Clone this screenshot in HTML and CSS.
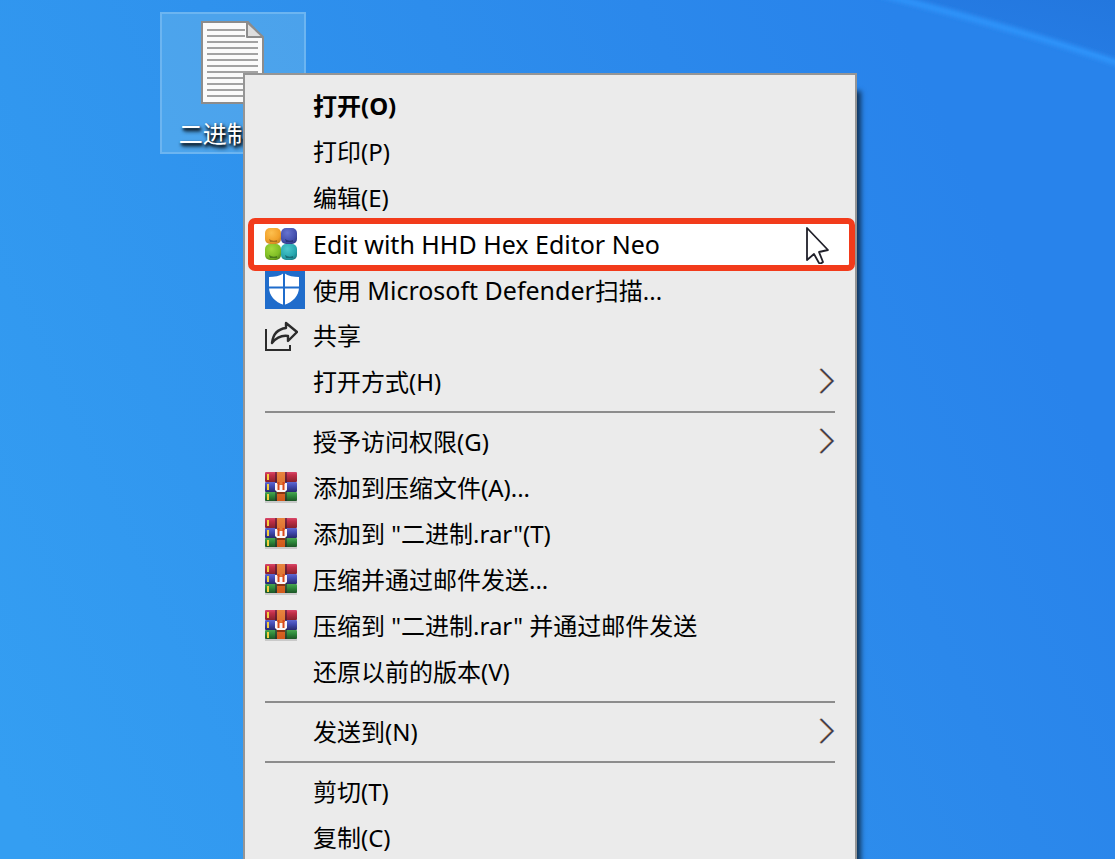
FILE: index.html
```html
<!DOCTYPE html>
<html lang="zh-CN">
<head>
<meta charset="utf-8">
<title>桌面</title>
<link rel="stylesheet" href="styles.css">
</head>
<body>
<svg class="symbols" aria-hidden="true">
  <defs>
    <linearGradient id="red" x1="0" y1="0" x2="0" y2="1"><stop offset="0" stop-color="#d9486a"/><stop offset=".3" stop-color="#c22f48"/><stop offset="1" stop-color="#86202c"/></linearGradient>
    <linearGradient id="blue" x1="0" y1="0" x2="0" y2="1"><stop offset="0" stop-color="#5f68d0"/><stop offset=".4" stop-color="#434cb4"/><stop offset="1" stop-color="#26286c"/></linearGradient>
    <linearGradient id="green" x1="0" y1="0" x2="0" y2="1"><stop offset="0" stop-color="#4aa552"/><stop offset=".4" stop-color="#2f8c3c"/><stop offset="1" stop-color="#1c5425"/></linearGradient>
    <linearGradient id="strap" x1="0" y1="0" x2="0" y2="1"><stop offset="0" stop-color="#e8853f"/><stop offset="1" stop-color="#d0581a"/></linearGradient>
  </defs>
  <symbol id="rar" viewBox="0 0 32 32">
    <rect y="28" width="32" height="3" fill="#c9c9c9"/>
    <rect width="32" height="10" rx="1" fill="url(#red)"/>
    <rect y="10" width="32" height="10" rx="1" fill="url(#blue)"/>
    <rect y="20" width="32" height="9" rx="1" fill="url(#green)"/>
    <path d="M11 0v29M21 0v29" stroke="#2b1830" stroke-opacity=".5" stroke-width="2"/>
    <path d="M2 2h2v6H2zM2 12h2v6H2zM2 22h2v6H2z" fill="#f7cf3c"/>
    <rect x="12" width="8" height="29" fill="url(#strap)"/>
    <path d="M12 20h8v2h-8z" fill="#8a3513"/>
    <path d="M10 11h3v2h6v-2h3v7l-2 2h-8l-2-2z" fill="#fbf6f6"/>
    <path d="M12 10h8v2h-8z" fill="#e17a38"/>
    <path d="M13.500 10v8M18.500 10v8" stroke="#d9481b" stroke-width="2"/>
  </symbol>
  <symbol id="arrow" viewBox="0 0 16 28">
    <path d="M1 1l12 12L1 25" fill="none" stroke="#e3a65b" stroke-width="2"/>
    <path d="M2.500 1l12 12-12 12" fill="none" stroke="#4f9be6" stroke-width="1.500"/>
    <path d="M1.700 1l12 12-12 12" fill="none" stroke="#47303f" stroke-width="1.300"/>
  </symbol>
</svg>

<svg class="wallpaper" viewBox="0 0 1115 859" preserveAspectRatio="none" aria-hidden="true">
  <defs>
    <linearGradient id="sky" gradientUnits="userSpaceOnUse" x1="0" y1="780" x2="1030" y2="300">
      <stop offset="0" stop-color="#349ef2"/><stop offset=".45" stop-color="#2f92ed"/><stop offset=".8" stop-color="#2b88eb"/><stop offset="1" stop-color="#2883eb"/>
    </linearGradient>
    <linearGradient id="corner" x1="0" y1="1" x2="1" y2="0"><stop offset="0" stop-color="#277fe8"/><stop offset="1" stop-color="#2377de"/></linearGradient>
    <filter id="soft" x="-10%" y="-30%" width="120%" height="160%"><feGaussianBlur stdDeviation="2"/></filter>
  </defs>
  <rect width="1115" height="859" fill="url(#sky)"/>
  <path d="M900 0h215v60C1050 40 970 18 900 0z" fill="url(#corner)"/>
  <path d="M880-6C960 14 1045 38 1130 67" fill="none" stroke="#2f94fb" stroke-width="6" filter="url(#soft)"/>
</svg>

<main class="desktop">
  <button class="file" type="button">
    <svg class="page" viewBox="0 0 66 86" aria-hidden="true">
      <path d="M2 2h46l15 16v65H2z" fill="#fafafa" stroke="#8c8c8c" stroke-width="2"/>
      <path d="M7 10h38M7 16h38M7 22h51M7 28h51M7 34h51M7 40h51M7 46h51M7 52h51M7 58h51M7 64h51M7 70h51M7 76h51" stroke="#a2a2a2" stroke-width="2"/>
      <path d="M47 2v15h16z" fill="#dedede" stroke="#8c8c8c" stroke-width="2" stroke-linejoin="round"/>
    </svg>
    <span class="name">二进制.txt</span>
  </button>
</main>

<div class="menu" role="menu">
  <button class="item default" role="menuitem"><span class="icon"></span><span class="label">打开(O)</span></button>
  <button class="item" role="menuitem"><span class="icon"></span><span class="label">打印(P)</span></button>
  <button class="item" role="menuitem"><span class="icon"></span><span class="label">编辑(E)</span></button>
  <button class="item current" role="menuitem">
    <span class="icon"><svg width="33" height="33" viewBox="0 0 33 33" aria-hidden="true">
      <defs>
        <radialGradient id="o" cx=".4" cy=".3" r=".75"><stop offset="0" stop-color="#fdc04f"/><stop offset=".7" stop-color="#f2a12a"/><stop offset="1" stop-color="#c98424"/></radialGradient>
        <radialGradient id="b" cx=".4" cy=".3" r=".75"><stop offset="0" stop-color="#6673cf"/><stop offset=".7" stop-color="#4450ad"/><stop offset="1" stop-color="#303a86"/></radialGradient>
        <radialGradient id="g" cx=".4" cy=".3" r=".75"><stop offset="0" stop-color="#a4da3c"/><stop offset=".7" stop-color="#7fbd25"/><stop offset="1" stop-color="#598c1c"/></radialGradient>
        <radialGradient id="t" cx=".4" cy=".3" r=".75"><stop offset="0" stop-color="#4cc8cd"/><stop offset=".7" stop-color="#27a7af"/><stop offset="1" stop-color="#1c7f88"/></radialGradient>
      </defs>
      <rect width="16" height="16" rx="5" fill="url(#o)"/><rect x="16" width="16" height="16" rx="5" fill="url(#b)"/>
      <rect y="16" width="16" height="16" rx="5" fill="url(#g)"/><rect x="16" y="16" width="16" height="16" rx="5" fill="url(#t)"/>
      <path d="M4 11q4 3 8 1v2H5z" fill="#a9701f"/><path d="M20 11q4 3 8 1v2h-7z" fill="#2b3478"/>
      <path d="M4 27q4 3 8 1v2H5z" fill="#487a1a"/><path d="M20 27q4 3 8 1v2h-7z" fill="#196c76"/>
    </svg></span>
    <span class="label latin">Edit with HHD Hex Editor Neo</span>
    <svg class="cursor" viewBox="0 0 26 40" aria-hidden="true"><path d="M2 4v32l7-6 5 9q2 1 4-1l-4-10 9-2z" fill="#fff" stroke="#20202a" stroke-width="1.800" stroke-linejoin="round"/></svg>
  </button>
  <button class="item" role="menuitem">
    <span class="icon"><svg width="40" height="38" viewBox="0 0 40 38" aria-hidden="true">
      <rect width="40" height="38" fill="#1f6ccb"/>
      <path d="M19 2C15 5 9 6 4 6v10c0 9 6 15 15 18 9-3 15-9 15-18V6c-5 0-11-1-15-4z" fill="#fff"/>
      <path d="M19 1v34M3 16.500h32" stroke="#1f6ccb" stroke-width="2"/>
    </svg></span>
    <span class="label">使用 <span class="latin">Microsoft Defender</span>扫描...</span>
  </button>
  <button class="item" role="menuitem">
    <span class="icon"><svg width="33" height="32" viewBox="0 0 33 32" fill="none" stroke="#2b2b2b" stroke-width="2" aria-hidden="true">
      <path d="M1 9v21h24v-5"/><path d="M21 3l11 9-9 9v-5c-7-1-12 2-16 7 1-9 6-14 14-15z" stroke-width="2.400" stroke-linejoin="round"/>
    </svg></span>
    <span class="label">共享</span>
  </button>
  <button class="item" role="menuitem"><span class="icon"></span><span class="label">打开方式(H)</span><svg class="arrow" aria-hidden="true"><use href="#arrow"/></svg></button>
  <hr class="separator">
  <button class="item" role="menuitem"><span class="icon"></span><span class="label">授予访问权限(G)</span><svg class="arrow" aria-hidden="true"><use href="#arrow"/></svg></button>
  <button class="item" role="menuitem"><span class="icon"><svg class="rar" aria-hidden="true"><use href="#rar"/></svg></span><span class="label">添加到压缩文件(A)...</span></button>
  <button class="item" role="menuitem"><span class="icon"><svg class="rar" aria-hidden="true"><use href="#rar"/></svg></span><span class="label">添加到 "二进制.rar"(T)</span></button>
  <button class="item" role="menuitem"><span class="icon"><svg class="rar" aria-hidden="true"><use href="#rar"/></svg></span><span class="label">压缩并通过邮件发送...</span></button>
  <button class="item" role="menuitem"><span class="icon"><svg class="rar" aria-hidden="true"><use href="#rar"/></svg></span><span class="label">压缩到 "二进制.rar" 并通过邮件发送</span></button>
  <button class="item" role="menuitem"><span class="icon"></span><span class="label">还原以前的版本(V)</span></button>
  <hr class="separator">
  <button class="item" role="menuitem"><span class="icon"></span><span class="label">发送到(N)</span><svg class="arrow" aria-hidden="true"><use href="#arrow"/></svg></button>
  <hr class="separator">
  <button class="item" role="menuitem"><span class="icon"></span><span class="label">剪切(T)</span></button>
  <button class="item" role="menuitem"><span class="icon"></span><span class="label">复制(C)</span></button>
</div>
</body>
</html>
```
FILE: styles.css
```css
* { box-sizing: border-box; }

body {
  margin: 0;
  min-height: 100vh;
  overflow: hidden;
  position: relative;
  background: #2f92ee;
  font-family: "Noto Sans", "Noto Sans CJK SC", sans-serif;
  font-size: 24px;
  line-height: 32px;
}

button {
  font: inherit;
  color: inherit;
  border: 0;
  background: none;
  padding: 0;
}

.symbols { position: absolute; width: 0; height: 0; }

.wallpaper {
  position: absolute;
  inset: 0;
  width: 100%;
  height: 100%;
}

.desktop {
  position: relative;
  padding: 12px 160px;
}

.file {
  display: flex;
  flex-direction: column;
  align-items: center;
  width: 146px;
  height: 142px;
  padding: 6px 0 0;
  gap: 16px;
  border: 2px solid #6cb5f1;
  background: rgba(120, 190, 235, 0.4);
}

.page { width: 66px; height: 86px; }

.name {
  line-height: 24px;
  color: #fff;
  text-shadow: 1px 2px 3px #000, 2px 3px 4px #000;
}

.menu {
  position: absolute;
  top: 73px;
  bottom: 0;
  left: 243px;
  right: 258px;
  padding: 8px 0 0;
  border: 2px solid #959595;
  border-bottom: 0;
  background: #ebebeb;
  color: #000;
  box-shadow: 8px 14px 5px -4px rgba(0, 0, 0, 0.6);
}

.item {
  position: relative;
  display: flex;
  align-items: center;
  width: 100%;
  height: 46px;
  padding: 0 20px;
  text-align: left;
}

.icon {
  display: flex;
  width: 48px;
  flex: none;
}

.label {
  flex: 1;
  white-space: nowrap;
}

.latin { font-size: 25px; }

.default { font-weight: 700; }

.current::before {
  content: "";
  position: absolute;
  inset: -3px 0 -4px 3px;
  border: 6px solid #f23b1b;
  border-radius: 7px;
  background: #fff;
}

.current { z-index: 1; }
.current > * { position: relative; }

.cursor {
  width: 26px;
  height: 40px;
  margin-right: 4px;
}

.rar { width: 32px; height: 32px; }
.arrow { width: 16px; height: 28px; }

.separator {
  height: 2px;
  margin: 6px 20px;
  border: 0;
  background: #8c8c8c;
}
```
